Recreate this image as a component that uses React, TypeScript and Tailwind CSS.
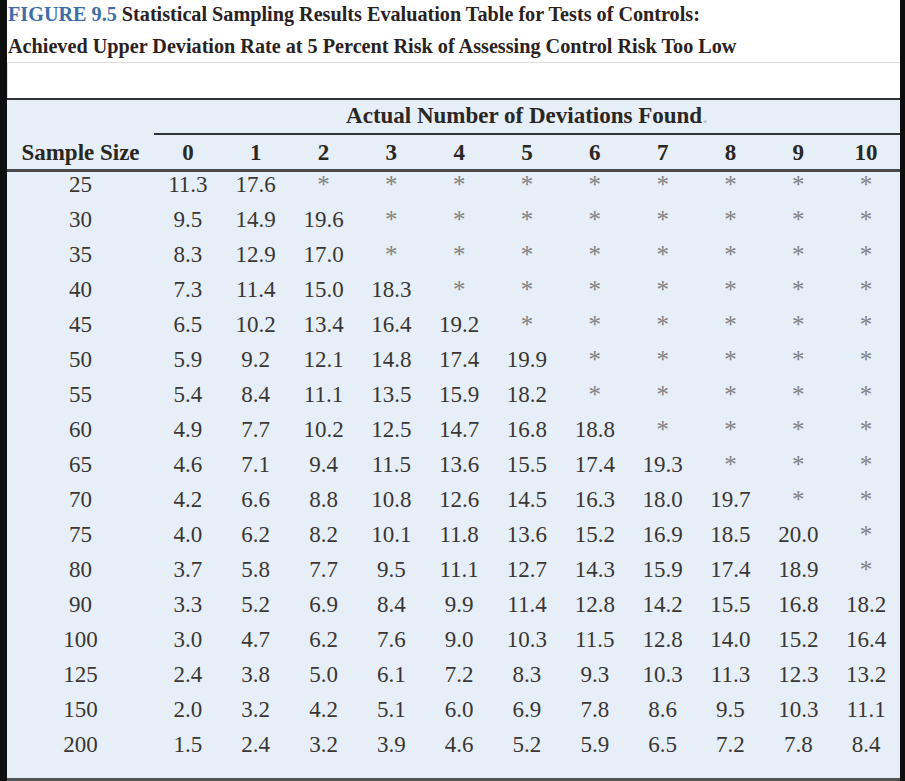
import React from "react";

const rows: [string, string[]][] = [
  ["25", ["11.3", "17.6"]],
  ["30", ["9.5", "14.9", "19.6"]],
  ["35", ["8.3", "12.9", "17.0"]],
  ["40", ["7.3", "11.4", "15.0", "18.3"]],
  ["45", ["6.5", "10.2", "13.4", "16.4", "19.2"]],
  ["50", ["5.9", "9.2", "12.1", "14.8", "17.4", "19.9"]],
  ["55", ["5.4", "8.4", "11.1", "13.5", "15.9", "18.2"]],
  ["60", ["4.9", "7.7", "10.2", "12.5", "14.7", "16.8", "18.8"]],
  ["65", ["4.6", "7.1", "9.4", "11.5", "13.6", "15.5", "17.4", "19.3"]],
  ["70", ["4.2", "6.6", "8.8", "10.8", "12.6", "14.5", "16.3", "18.0", "19.7"]],
  ["75", ["4.0", "6.2", "8.2", "10.1", "11.8", "13.6", "15.2", "16.9", "18.5", "20.0"]],
  ["80", ["3.7", "5.8", "7.7", "9.5", "11.1", "12.7", "14.3", "15.9", "17.4", "18.9"]],
  ["90", ["3.3", "5.2", "6.9", "8.4", "9.9", "11.4", "12.8", "14.2", "15.5", "16.8", "18.2"]],
  ["100", ["3.0", "4.7", "6.2", "7.6", "9.0", "10.3", "11.5", "12.8", "14.0", "15.2", "16.4"]],
  ["125", ["2.4", "3.8", "5.0", "6.1", "7.2", "8.3", "9.3", "10.3", "11.3", "12.3", "13.2"]],
  ["150", ["2.0", "3.2", "4.2", "5.1", "6.0", "6.9", "7.8", "8.6", "9.5", "10.3", "11.1"]],
  ["200", ["1.5", "2.4", "3.2", "3.9", "4.6", "5.2", "5.9", "6.5", "7.2", "7.8", "8.4"]],
];

const cols = Array.from({ length: 11 }, (_, i) => i);

export default function App() {
  return (
    <div className="w-[905px] h-[781px] bg-[#0e0e0e] flex font-['Liberation_Serif','Times_New_Roman',serif] overflow-hidden">
      <div className="ml-[7px] w-[893px] h-full bg-white flex flex-col">
        {/* Title */}
        <div className="mt-[-2px] pl-[1px] text-[20.2px] font-bold text-[#2a221f] leading-[32px] whitespace-nowrap">
          <div>
            <span className="text-[#3d6ea8]">FIGURE 9.5</span> Statistical Sampling Results Evaluation Table for Tests of Controls:
          </div>
          <div>Achieved Upper Deviation Rate at 5 Percent Risk of Assessing Control Risk Too Low</div>
        </div>

        {/* empty box */}
        <div className="h-[36px] border-t border-l border-[#dedede] bg-white" />

        {/* Table */}
        <div className="flex-1 flex flex-col bg-[#e6eef7] border-t-2 border-[#333]">
          <div className="grid grid-cols-[147px_1fr]">
            <div />
            <div className="h-[35px] border-b-2 border-[#333] flex justify-center items-start pt-[1px] text-[23px] font-bold text-[#2a2623] leading-[30px]">
              <span>
                Actual Number of Deviations Found<span className="text-[#bbb] font-normal">.</span>
              </span>
            </div>
          </div>
          <div className="grid grid-cols-[147px_repeat(11,1fr)] h-[37px] border-b-[3px] border-[#4a4a4a] text-[23px] font-bold text-[#2a2623] leading-[36px]">
            <div className="text-center">Sample Size</div>
            {cols.map((c) => (
              <div key={c} className="text-center">
                {c}
              </div>
            ))}
          </div>
          <div className="flex-1 flex flex-col">
            {rows.map(([size, vals]) => (
              <div
                key={size}
                className="grid grid-cols-[147px_repeat(11,1fr)] h-[35px] text-[23px] text-[#3a3634] leading-[26px]"
              >
                <div className="text-center">{size}</div>
                {cols.map((c) => (
                  <div key={c} className="text-center">
                    {vals[c] !== undefined ? (
                      vals[c]
                    ) : (
                      <span className="text-[25px] text-[#838383]">*</span>
                    )}
                  </div>
                ))}
              </div>
            ))}
          </div>
          <div className="h-[3px] bg-[#555]" />
        </div>
      </div>
    </div>
  );
}
